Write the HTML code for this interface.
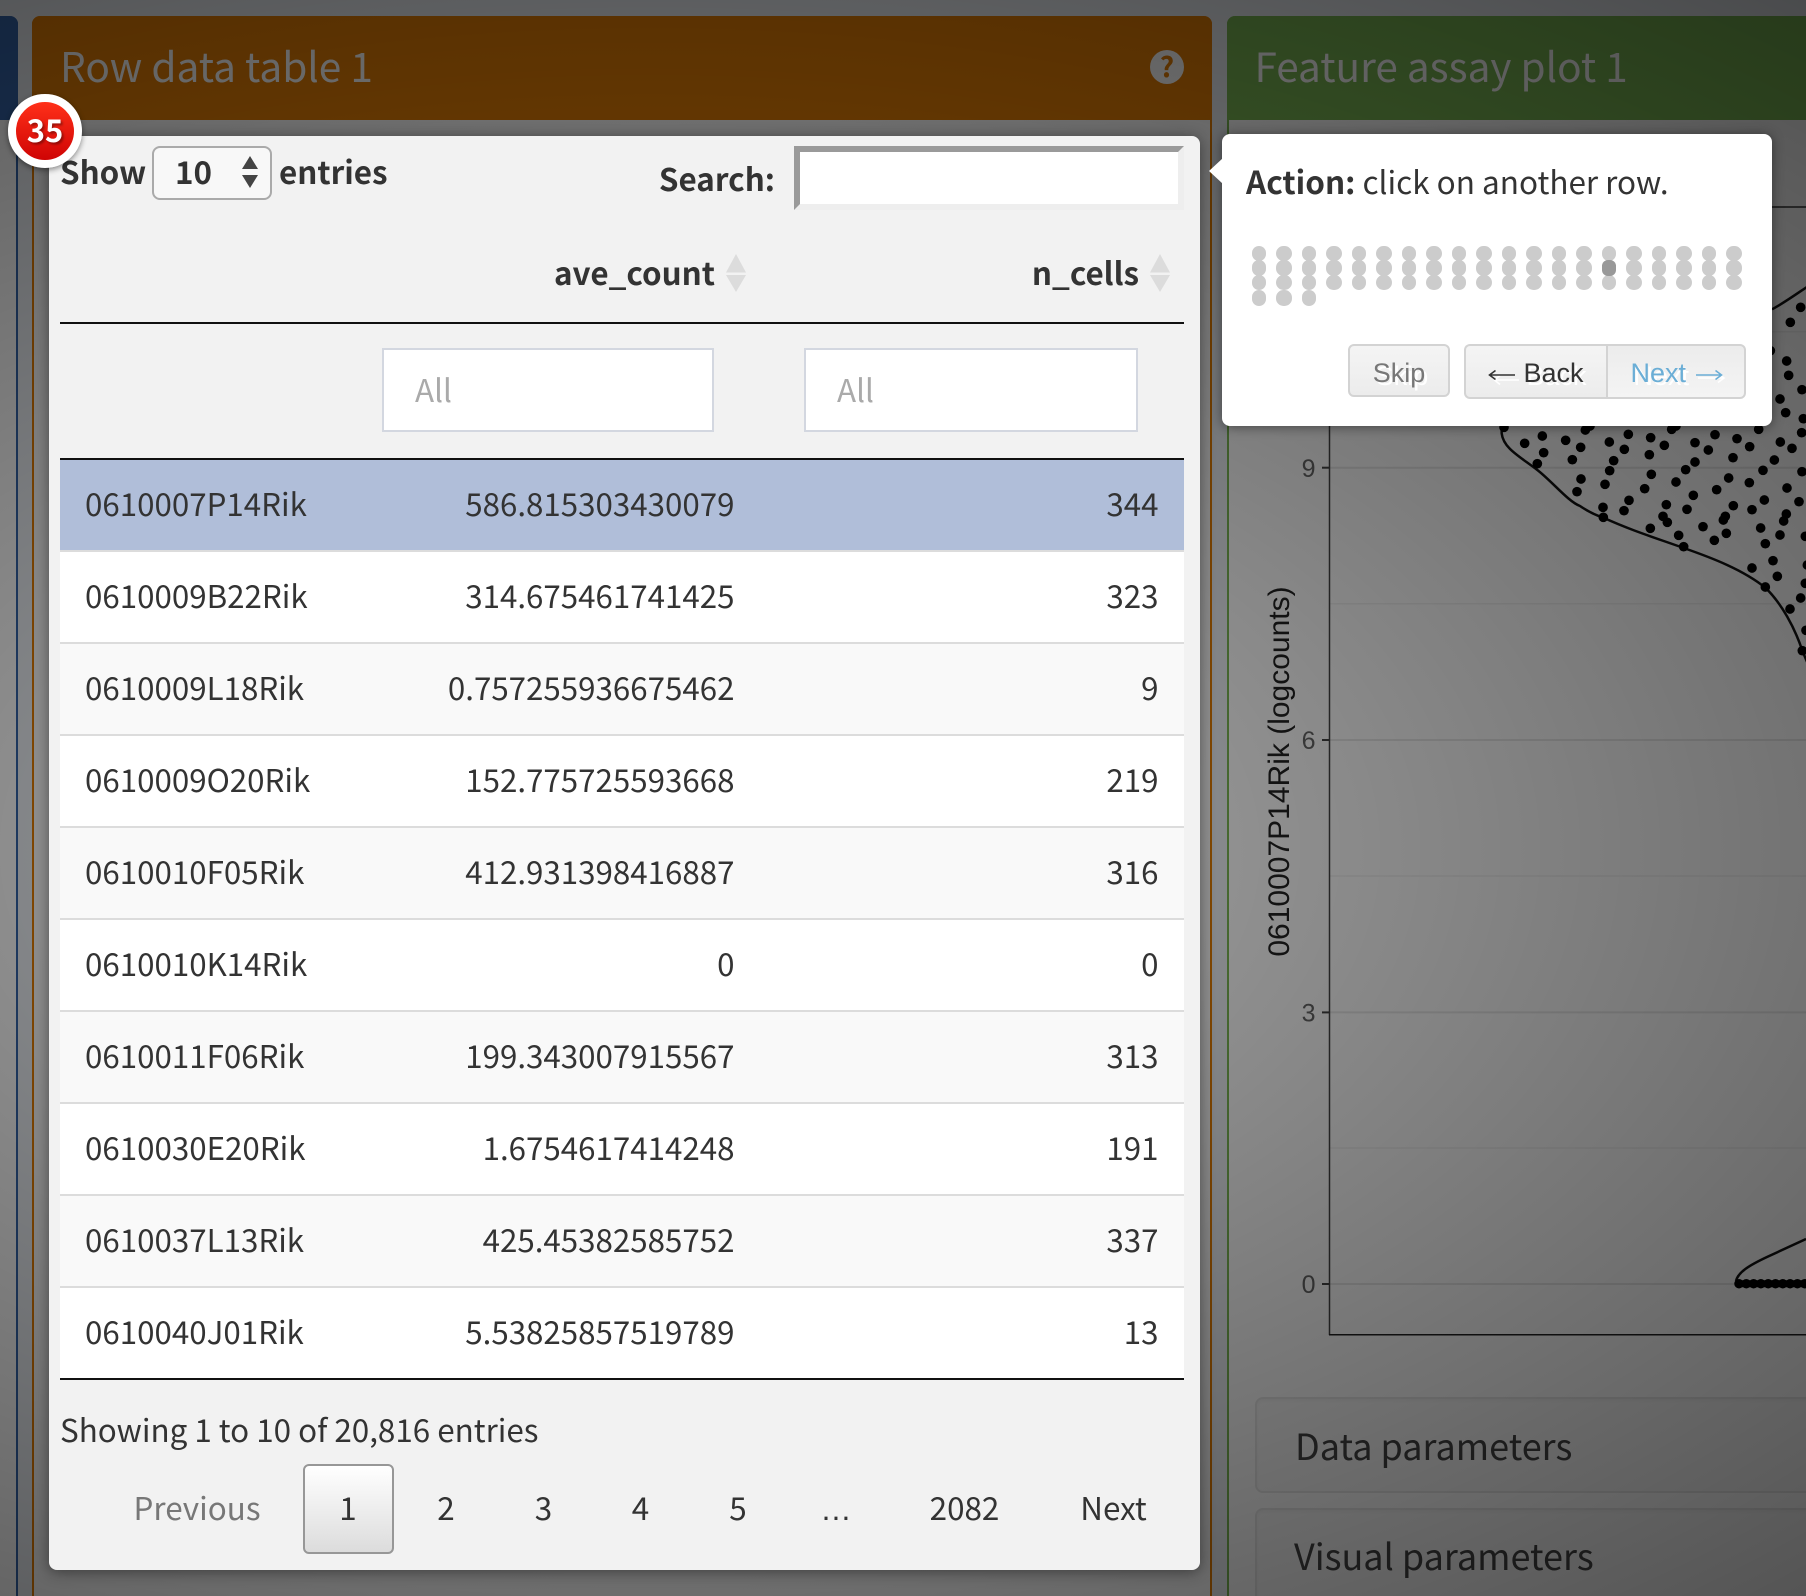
<!DOCTYPE html>
<html lang="en">
<head>
<meta charset="utf-8">
<title>Row data table 1</title>
<style>
html,body{margin:0;padding:0;background:#ecf0f5;width:1806px;height:1596px;overflow:hidden}
body{position:relative;font-family:"Noto Sans CJK SC","Liberation Sans",sans-serif;color:#333}
.a{position:absolute}
.t{position:absolute;white-space:nowrap;line-height:40px;font-size:31.4px;color:#333}
.b{font-weight:700}
.panel{position:absolute;top:16px;height:1580px;background:#fff;box-sizing:border-box;border-style:solid;border-width:0 2px;border-radius:8px 8px 0 0}
.head{position:absolute;top:16px;height:104px;border-radius:8px 8px 0 0}
.title{position:absolute;top:37px;line-height:56px;font-size:40.6px;color:#fff;white-space:nowrap}
.well{position:absolute;left:1255px;width:700px;background:#f9f9f9;border:2px solid #e8e8e8;border-radius:8px;box-sizing:border-box;box-shadow:inset 0 2px 3px rgba(0,0,0,.04)}
.wt{position:absolute;white-space:nowrap;font-size:36px;line-height:50px;color:#444}
#overlay{position:absolute;left:0;top:0;width:1806px;height:1596px;background:radial-gradient(ellipse 2240px 1300px at 650px 850px,rgba(0,0,0,.32) 0,rgba(0,0,0,.76) 100%)}
#helper{position:absolute;left:49px;top:136px;width:1151px;height:1434px;background:#f2f2f2;border-radius:8px;box-shadow:0 2px 15px rgba(0,0,0,.45)}
#tip{position:absolute;left:1222px;top:134px;width:550px;height:292px;background:#fff;border-radius:8px;box-shadow:0 1px 12px rgba(0,0,0,.45)}
.row{position:absolute;left:60px;width:1124px;height:90px;border-bottom:2px solid #dcdcdc;background:#fff}
.row.s{background:#f9f9f9}
.row.sel{background:#b0bed9}
.row span{position:absolute;top:0;line-height:88px;font-size:31.3px;color:#333;white-space:nowrap}
.c1{left:25px}.c2{right:449.500px}.c3{right:25.500px}
.pg{position:absolute;top:1488px;width:120px;text-align:center;line-height:40px;font-size:31.4px;color:#333;white-space:nowrap}
.btn{position:absolute;box-sizing:border-box;font-family:"Liberation Sans",sans-serif;font-size:27px;text-align:center;white-space:nowrap;text-shadow:3px 3px 0 #fff}
.btn span{position:absolute;top:0}
.filter{position:absolute;top:348px;height:84px;box-sizing:border-box;background:#fff;border:2px solid #d3d7e0}
</style>
</head>
<body>

<!-- underlying page -->
<div class="panel" style="left:-600px;width:618px;border-color:#3565AA"></div>
<div class="head" style="left:-600px;width:618px;background:#3565AA"></div>

<div class="panel" style="left:32px;width:1180px;border-color:#E47E04"></div>
<div class="head" style="left:32px;width:1180px;background:#E47E04"></div>
<div class="title" style="left:60px">Row data table 1</div>
<svg class="a" style="left:1149px;top:49px" width="36" height="36" viewBox="0 0 36 36"><circle cx="18" cy="18" r="17" fill="#fff"/><text x="18" y="28" text-anchor="middle" font-family="Noto Sans CJK SC,Liberation Sans,sans-serif" font-weight="700" font-size="28" fill="#E47E04">?</text></svg>

<div class="panel" style="left:1227px;width:900px;border-color:#7BB854"></div>
<div class="head" style="left:1227px;width:900px;background:#7BB854"></div>
<div class="title" style="left:1254.500px;font-size:40.5px">Feature assay plot 1</div>

<!-- plot -->
<svg class="a" style="left:0;top:0" width="1806" height="1596" viewBox="0 0 1806 1596">
  <g stroke="#f1f1f1" stroke-width="1.5">
    <line x1="1330" x2="1806" y1="331.7" y2="331.7"/>
    <line x1="1330" x2="1806" y1="603.7" y2="603.7"/>
    <line x1="1330" x2="1806" y1="876" y2="876"/>
    <line x1="1330" x2="1806" y1="1148" y2="1148"/>
  </g>
  <g stroke="#e8e8e8" stroke-width="2">
    <line x1="1330" x2="1806" y1="467.7" y2="467.7"/>
    <line x1="1330" x2="1806" y1="740" y2="740"/>
    <line x1="1330" x2="1806" y1="1012.4" y2="1012.4"/>
    <line x1="1330" x2="1806" y1="1284" y2="1284"/>
  </g>
  <line x1="1329" x2="1806" y1="207" y2="207" stroke="#333" stroke-width="1.5"/>
  <line x1="1329.5" x2="1329.5" y1="207" y2="1335" stroke="#444" stroke-width="1.5"/>
  <line x1="1329" x2="1806" y1="1334.7" y2="1334.7" stroke="#222" stroke-width="1.5"/>
  <g stroke="#444" stroke-width="2">
    <line x1="1322" x2="1329" y1="467.7" y2="467.7"/>
    <line x1="1322" x2="1329" y1="740" y2="740"/>
    <line x1="1322" x2="1329" y1="1012.4" y2="1012.4"/>
    <line x1="1322" x2="1329" y1="1284" y2="1284"/>
  </g>
  <g font-family="Liberation Sans,sans-serif" font-size="25" fill="#666" text-anchor="end">
    <text x="1315.500" y="477">9</text>
    <text x="1315.500" y="749">6</text>
    <text x="1315.500" y="1021.500">3</text>
    <text x="1315.500" y="1293">0</text>
  </g>
  <text transform="translate(1289,771.5) rotate(-90)" text-anchor="middle" font-family="Liberation Sans,sans-serif" font-size="30" fill="#222">0610007P14Rik (logcounts)</text>

  <g transform="translate(1480,420) scale(.33333)" fill="#000">
    <path d="M65 -50L65 40C70 85 120 110 172 150C215 183 265 245 300 258C325 275 345 285 370 293C450 330 530 355 611 384C700 415 790 450 856 503C905 550 945 625 967 692L985 735" fill="none" stroke="#111" stroke-width="7.500"/>
    <circle cx="72" cy="22" r="14.5"/><circle cx="134" cy="70" r="14.5"/><circle cx="187" cy="48" r="14.5"/><circle cx="191" cy="98" r="14.5"/><circle cx="172" cy="131" r="14.5"/><circle cx="257" cy="61" r="14.5"/><circle cx="302" cy="82" r="14.5"/><circle cx="277" cy="119" r="14.5"/><circle cx="316" cy="30" r="14.5"/><circle cx="330" cy="18" r="14.5"/><circle cx="303" cy="177" r="14.5"/><circle cx="291" cy="215" r="14.5"/><circle cx="388" cy="66" r="14.5"/><circle cx="433" cy="88" r="14.5"/><circle cx="445" cy="43" r="14.5"/><circle cx="401" cy="122" r="14.5"/><circle cx="389" cy="152" r="14.5"/><circle cx="375" cy="193" r="14.5"/><circle cx="369" cy="262" r="14.5"/><circle cx="370" cy="292" r="14.5"/><circle cx="447" cy="241" r="14.5"/><circle cx="432" cy="272" r="14.5"/><circle cx="512" cy="53" r="14.5"/><circle cx="553" cy="76" r="14.5"/><circle cx="508" cy="104" r="14.5"/><circle cx="514" cy="163" r="14.5"/><circle cx="494" cy="206" r="14.5"/><circle cx="575" cy="28" r="14.5"/><circle cx="588" cy="18" r="14.5"/><circle cx="645" cy="68" r="14.5"/><circle cx="685" cy="90" r="14.5"/><circle cx="705" cy="44" r="14.5"/><circle cx="645" cy="126" r="14.5"/><circle cx="617" cy="149" r="14.5"/><circle cx="588" cy="186" r="14.5"/><circle cx="640" cy="226" r="14.5"/><circle cx="559" cy="254" r="14.5"/><circle cx="621" cy="268" r="14.5"/><circle cx="549" cy="289" r="14.5"/><circle cx="562" cy="307" r="14.5"/><circle cx="511" cy="325" r="14.5"/><circle cx="596" cy="346" r="14.5"/><circle cx="611" cy="380" r="14.5"/><circle cx="771" cy="56" r="14.5"/><circle cx="809" cy="80" r="14.5"/><circle cx="836" cy="28" r="14.5"/><circle cx="759" cy="113" r="14.5"/><circle cx="746" cy="174" r="14.5"/><circle cx="710" cy="209" r="14.5"/><circle cx="808" cy="188" r="14.5"/><circle cx="760" cy="257" r="14.5"/><circle cx="816" cy="269" r="14.5"/><circle cx="736" cy="289" r="14.5"/><circle cx="730" cy="300" r="14.5"/><circle cx="669" cy="320" r="14.5"/><circle cx="739" cy="340" r="14.5"/><circle cx="703" cy="361" r="14.5"/><circle cx="849" cy="151" r="14.5"/><circle cx="883" cy="120" r="14.5"/><circle cx="901" cy="66" r="14.5"/><circle cx="936" cy="85" r="14.5"/><circle cx="965" cy="38" r="14.5"/><circle cx="966" cy="155" r="14.5"/><circle cx="921" cy="204" r="14.5"/><circle cx="853" cy="240" r="14.5"/><circle cx="957" cy="245" r="14.5"/><circle cx="919" cy="282" r="14.5"/><circle cx="911" cy="303" r="14.5"/><circle cx="842" cy="324" r="14.5"/><circle cx="900" cy="345" r="14.5"/><circle cx="856" cy="371" r="14.5"/><circle cx="976" cy="349" r="14.5"/><circle cx="879" cy="422" r="14.5"/><circle cx="816" cy="444" r="14.5"/><circle cx="892" cy="469" r="14.5"/><circle cx="856" cy="501" r="14.5"/><circle cx="930" cy="567" r="14.5"/><circle cx="962" cy="534" r="14.5"/><circle cx="976" cy="490" r="14.5"/><circle cx="982" cy="435" r="14.5"/><circle cx="978" cy="631" r="14.5"/><circle cx="967" cy="692" r="14.5"/>
  </g>
  <g transform="translate(1480,200) scale(.33333)" fill="#000">
    <path d="M876 328C910 310 945 285 985 258" fill="none" stroke="#111" stroke-width="7.500"/>
    <circle cx="962" cy="322" r="14.5"/><circle cx="931" cy="367" r="14.5"/><circle cx="920" cy="483" r="14.5"/><circle cx="926" cy="526" r="14.5"/><circle cx="966" cy="569" r="14.5"/><circle cx="900" cy="597" r="14.5"/><circle cx="917" cy="638" r="14.5"/><circle cx="970" cy="656" r="14.5"/><circle cx="871" cy="452" r="14.5"/>
  </g>
  <path d="M1736 1281C1738 1272 1750 1265 1767 1257L1806 1239" fill="none" stroke="#111" stroke-width="2.500"/>
  <line x1="1739" x2="1806" y1="1283.7" y2="1283.7" stroke="#000" stroke-width="7"/>
  <line x1="1739" x2="1806" y1="1283.7" y2="1283.7" stroke="#000" stroke-width="9.500" stroke-linecap="round" stroke-dasharray="0 7.3"/>
</svg>

<div class="well" style="top:1397px;height:96px"></div>
<div class="wt" style="left:1295px;top:1420px">Data parameters</div>
<div class="well" style="top:1508px;height:140px"></div>
<div class="wt" style="left:1294px;top:1530px">Visual parameters</div>

<!-- overlay -->
<div id="overlay"></div>

<!-- highlighted table -->
<div id="helper"></div>

<div class="t b" style="left:60px;top:152px">Show</div>
<div class="a" style="left:152px;top:146px;width:120px;height:54px;box-sizing:border-box;border:2px solid #aaa;border-radius:8px;background:#f8f8f8"></div>
<div class="t b" style="left:175px;top:152px">10</div>
<svg class="a" style="left:240px;top:154px" width="20" height="36" viewBox="0 0 20 36"><path d="M2 15L10 2L18 15Z M2 21L18 21L10 34Z" fill="#444"/></svg>
<div class="t b" style="left:279px;top:152px">entries</div>

<div class="t b" style="right:1031px;top:159px">Search:</div>
<div class="a" style="left:794px;top:146px;width:390px;height:64px;box-sizing:border-box;background:#fff;border:6px solid;border-color:#9a9a9a #eeeeee #eeeeee #9a9a9a"></div>

<div class="t b" style="right:1091px;top:253px">ave_count</div>
<div class="t b" style="right:667px;top:253px">n_cells</div>
<svg class="a" style="left:726px;top:254px" width="20" height="38" viewBox="0 0 20 38"><path d="M0 18.500L10 0L20 18.500Z M0 21L20 21L10 38Z" fill="#dcdcdc"/></svg>
<svg class="a" style="left:1150px;top:254px" width="20" height="38" viewBox="0 0 20 38"><path d="M0 18.500L10 0L20 18.500Z M0 21L20 21L10 38Z" fill="#dcdcdc"/></svg>

<div class="a" style="left:60px;top:322px;width:1124px;height:2px;background:#111"></div>
<div class="filter" style="left:382px;width:332px"></div>
<div class="filter" style="left:804px;width:334px"></div>
<div class="t" style="left:415px;top:370px;color:#aaa">All</div>
<div class="t" style="left:837px;top:370px;color:#aaa">All</div>
<div class="a" style="left:60px;top:458px;width:1124px;height:2px;background:#111"></div>

<div class="row sel" style="top:460px"><span class="c1">0610007P14Rik</span><span class="c2">586.815303430079</span><span class="c3">344</span></div>
<div class="row" style="top:552px"><span class="c1">0610009B22Rik</span><span class="c2">314.675461741425</span><span class="c3">323</span></div>
<div class="row s" style="top:644px"><span class="c1">0610009L18Rik</span><span class="c2">0.757255936675462</span><span class="c3">9</span></div>
<div class="row" style="top:736px"><span class="c1">0610009O20Rik</span><span class="c2">152.775725593668</span><span class="c3">219</span></div>
<div class="row s" style="top:828px"><span class="c1">0610010F05Rik</span><span class="c2">412.931398416887</span><span class="c3">316</span></div>
<div class="row" style="top:920px"><span class="c1">0610010K14Rik</span><span class="c2">0</span><span class="c3">0</span></div>
<div class="row s" style="top:1012px"><span class="c1">0610011F06Rik</span><span class="c2">199.343007915567</span><span class="c3">313</span></div>
<div class="row" style="top:1104px"><span class="c1">0610030E20Rik</span><span class="c2">1.6754617414248</span><span class="c3">191</span></div>
<div class="row s" style="top:1196px"><span class="c1">0610037L13Rik</span><span class="c2">425.45382585752</span><span class="c3">337</span></div>
<div class="row" style="top:1288px;border-bottom:0"><span class="c1">0610040J01Rik</span><span class="c2">5.53825857519789</span><span class="c3">13</span></div>
<div class="a" style="left:60px;top:1378px;width:1124px;height:2px;background:#111"></div>

<div class="t" style="left:60px;top:1410px">Showing 1 to 10 of 20,816 entries</div>

<div class="a" style="left:303px;top:1464px;width:91px;height:90px;box-sizing:border-box;border:2px solid #979797;border-radius:6px;background:linear-gradient(#fff,#dcdcdc)"></div>
<div class="pg" style="left:133.500px;color:#777">Previous</div>
<div class="pg" style="left:288px">1</div>
<div class="pg" style="left:386px">2</div>
<div class="pg" style="left:483.500px">3</div>
<div class="pg" style="left:580.500px">4</div>
<div class="pg" style="left:678px">5</div>
<div class="pg" style="left:776px;top:1490px;font-family:'Liberation Sans',sans-serif">…</div>
<div class="pg" style="left:904.500px">2082</div>
<div class="pg" style="left:1053.500px">Next</div>

<!-- tooltip -->
<div id="tip"></div>
<svg class="a" style="left:1209px;top:158px" width="14" height="26" viewBox="0 0 14 26"><path d="M14 0L0 13L14 26Z" fill="#fff"/></svg>
<div class="t" style="left:1246px;top:161px;font-size:31.5px"><span class="b">Action:</span> click on another row.</div>

<svg class="a" style="left:1240px;top:240px" width="520" height="70" viewBox="0 0 520 70" fill="#ccc">
  <defs>
    <g id="ce"><rect x="-7" y="6" width="14" height="15" rx="7"/><rect x="-7" y="20" width="14" height="16" rx="7"/><rect x="-7" y="35" width="14" height="15" rx="7"/></g>
    <g id="co"><rect x="-8" y="6" width="16" height="15" rx="7.500"/><rect x="-8" y="20" width="16" height="16" rx="7.500"/><rect x="-8" y="35" width="16" height="15" rx="7.500"/></g>
  </defs>
  <use href="#ce" x="19"/><use href="#co" x="44"/><use href="#ce" x="69"/><use href="#co" x="94"/><use href="#ce" x="119"/><use href="#co" x="144"/><use href="#ce" x="169"/><use href="#co" x="194"/><use href="#ce" x="219"/><use href="#co" x="244"/><use href="#ce" x="269"/><use href="#co" x="294"/><use href="#ce" x="319"/><use href="#co" x="344"/><use href="#ce" x="369"/><use href="#co" x="394"/><use href="#ce" x="419"/><use href="#co" x="444"/><use href="#ce" x="469"/><use href="#co" x="494"/>
  <rect x="12" y="50" width="14" height="16" rx="7"/><rect x="36" y="50" width="16" height="16" rx="7.500"/><rect x="62" y="50" width="14" height="16" rx="7"/>
  <rect x="362" y="20" width="14" height="16" rx="6" fill="#999"/>
</svg>

<div class="btn" style="left:1348px;top:344px;width:102px;height:53px;border:2px solid #d3d3d3;border-radius:6px;background:linear-gradient(#f4f4f4,#ececec);color:#777;line-height:55px">Skip</div>
<div class="btn" style="left:1464px;top:344px;width:144px;height:55px;border:2px solid #d3d3d3;border-right:0;border-radius:6px 0 0 6px;background:linear-gradient(#f4f4f4,#ececec);color:#333;line-height:54px"><span style="left:57.500px">Back</span></div>
<div class="btn" style="left:1606px;top:344px;width:140px;height:55px;border:2px solid #d3d3d3;border-radius:0 6px 6px 0;background:linear-gradient(#ececec,#f4f4f4);color:#6baed6;line-height:54px"><span style="left:22.500px">Next</span></div>
<svg class="a" style="left:1480px;top:360px" width="260" height="30" viewBox="0 0 260 30" fill="none" stroke-width="1.6">
  <path d="M12.500 18H37M18 13.500L12.500 18L18 22.500" stroke="#fff" transform="translate(2,2)"/>
  <path d="M9.500 15H35M15.500 10.500L9.500 15L15.500 19.500" stroke="#333"/>
  <path d="M218 18H244M238 13.500L244 18L238 22.500" stroke="#fff"/>
  <path d="M216 15H241.500M235.500 10.500L241.500 15L235.500 19.500" stroke="#6baed6"/>
</svg>

<!-- badge -->
<div class="a" style="left:8px;top:94px;width:74px;height:74px;box-sizing:border-box;border:8px solid #fff;border-radius:50%;background:linear-gradient(#ff3019,#cf0404);box-shadow:0 2px 6px rgba(0,0,0,.45);text-align:center;color:#fff;font-weight:700;font-size:31px;line-height:54px;text-shadow:2px 2px 2px rgba(0,0,0,.35)">35</div>

</body>
</html>
